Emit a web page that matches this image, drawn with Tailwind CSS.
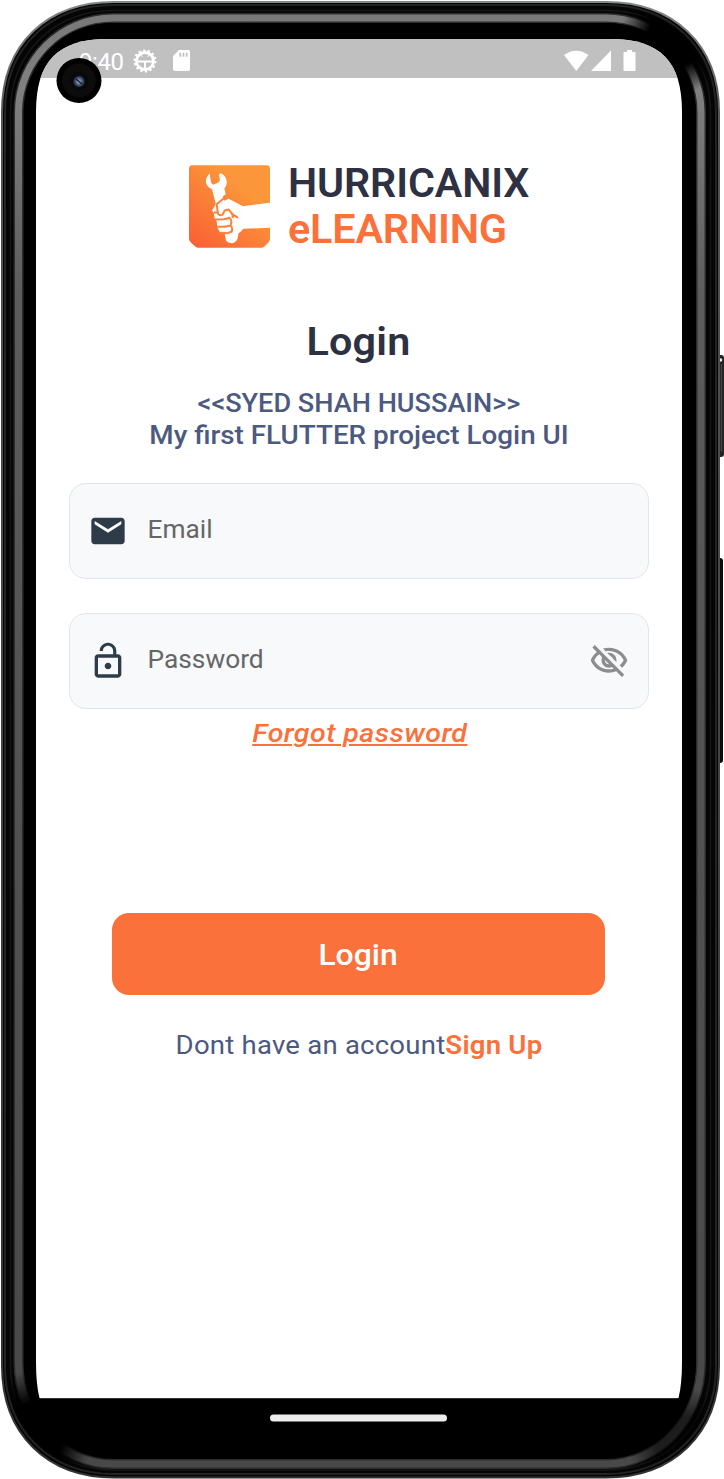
<!DOCTYPE html>
<html lang="en">
<head>
<meta charset="utf-8">
<title>Hurricanix eLearning</title>
<script src="https://cdn.jsdelivr.net/npm/@tailwindcss/browser@4"></script>
</head>
<body class="relative h-[1479px] w-[724px] overflow-hidden bg-white font-[Roboto,sans-serif]">
<!-- phone body -->
<svg class="absolute inset-0" width="724" height="1479" viewBox="0 0 724 1479" fill="none">
  <defs>
    <linearGradient id="edge" x1="0" y1="0" x2="0" y2="1479" gradientUnits="userSpaceOnUse"><stop stop-color="#858987"/><stop offset=".08" stop-color="#555"/><stop offset="1" stop-color="#333"/></linearGradient>
    <linearGradient id="band" x1="0" y1="0" x2="0" y2="1479" gradientUnits="userSpaceOnUse"><stop stop-color="#777"/><stop offset=".06" stop-color="#808080"/><stop offset=".2" stop-color="#5c5c5c"/><stop offset=".6" stop-color="#505050"/><stop offset="1" stop-color="#484848"/></linearGradient>
    <radialGradient id="fade"><stop offset=".5" stop-color="#000"/><stop offset="1" stop-color="#000" stop-opacity="0"/></radialGradient>
    <radialGradient id="lens"><stop stop-color="#a9c0e8"/><stop offset=".4" stop-color="#6578a0"/><stop offset="1" stop-color="#12151d"/></radialGradient>
    <clipPath id="body"><path d="M7 112C7 50 51 7 114 7H606C669 7 714 50 714 112V1366C714 1430 669 1472 606 1472H114C51 1472 7 1430 7 1366Z"/></clipPath>
    <clipPath id="bar"><path d="M0 0H724V78H0Z"/></clipPath>
  </defs>
  <rect x="714" y="355" width="10" height="102" rx="3" fill="#222"/><circle cx="720.5" cy="360" r="1.8" fill="#eee"/>
  <path d="M721.5 364v88" stroke="#444" stroke-width="1.5"/>
  <rect x="714" y="558" width="9" height="205" rx="3" fill="#0b0b0b"/>
  <path d="M2 112C2 44 47 2 114 2H606C673 2 719 44 719 112V1366C719 1434 673 1477.500 606 1477.500H114C47 1477.500 2 1434 2 1366Z" fill="#050505" stroke="url(#edge)" stroke-width="2"/>
  <path d="M5 112C5 47 50 5 114 5H606C670 5 716 47 716 112V1366C716 1431 670 1474 606 1474H114C50 1474 5 1431 5 1366Z" stroke="#222423" stroke-width="2"/>
  <path d="M10.500 112C10.500 53 54 10.500 114 10.500H606C666 10.500 710.500 53 710.500 112V1366C710.500 1425 666 1470 606 1470H114C54 1470 10.500 1425 10.500 1366Z" stroke="#161616" stroke-width="1.500"/>
  <path d="M18.500 112C18.500 60 61 18 113 18H606C658 18 701 60 701 112V1362C701 1420 658 1464 606 1464H113C61 1464 18.500 1420 18.500 1362Z" stroke="#2c2c2c" stroke-width="10"/>
  <path d="M18.500 112C18.500 60 61 18 113 18H606C658 18 701 60 701 112V1362C701 1420 658 1464 606 1464H113C61 1464 18.500 1420 18.500 1362Z" stroke="url(#band)" stroke-width="7"/>
  <g clip-path="url(#body)">
    <circle cx="676" cy="38" r="56" fill="url(#fade)"/>
    <ellipse cx="34" cy="1436" rx="58" ry="66" fill="url(#fade)"/>
    <circle cx="684" cy="1444" r="56" fill="url(#fade)" opacity=".6"/>
  </g>
  <path d="M24 114C24 63 62 23 113 23H606C657 23 696 63 696 114V1360C696 1418 655 1459 600 1459H120C65 1459 24 1418 24 1360Z" fill="#000"/>
  <path d="M36 112C36 61 58 39 108 39H610C660 39 682 61 682 112V1362Q682 1384 678.500 1398H39.500Q36 1384 36 1362Z" fill="#fff"/>
  <path clip-path="url(#bar)" d="M36 112C36 61 58 39 108 39H610C660 39 682 61 682 112Z" fill="#c0c0c0"/>
  <path d="M40 1398.500H678" stroke="#333"/>
  <rect x="270" y="1414.500" width="177" height="7" rx="3.500" fill="#eee"/>
</svg>

<main class="relative ml-9 flex h-[1398px] w-[646px] flex-col pt-[39px]">
  <header class="flex h-[39px] items-center pl-[43px] pr-[44px] text-white">
    <span class="mt-[6px] w-[54px] text-[24px] leading-none tracking-[-0.4px]">9:40</span>
    <svg class="mt-1" width="24" height="24" viewBox="0 0 24 24" fill="none" stroke="#fff">
      <circle cx="12" cy="12" r="8.500" stroke-width="2.800"/><circle cx="12" cy="12" r="10.500" stroke-width="2" stroke-dasharray="2.400 2.312"/>
      <path d="M4 12.500h16M12 12.500v8" stroke-width="2"/><path d="M8 6l1.500 2M16 6l-1.500 2" stroke-width="1"/>
    </svg>
    <svg class="mt-1 ml-[16px]" width="17" height="21" viewBox="0 0 17 21"><path fill="#fff" d="M6 0H15a2 2 0 0 1 2 2V19a2 2 0 0 1-2 2H2a2 2 0 0 1-2-2V6Z"/><path d="M7.300 2.800v4M10.500 2.800v4M13.700 2.800v4" stroke="#c0c0c0" stroke-width="1.700"/></svg>
    <svg class="mt-[5px] ml-auto" width="74" height="22" viewBox="0 0 74 22" fill="#fff"><path d="M0 5Q12.300-3.500 24.500 5L12.300 21Z M47 .5V21H27Z"/><path d="M63 0h5v2h2.500q1 0 1 1V20q0 1-1 1h-10q-1 0-1-1V3q0-1 1-1H63Z"/></svg>
  </header>

  <section class="mt-[87px] ml-[153px] flex">
    <svg width="81" height="83" viewBox="27 45 243 248">
      <defs><linearGradient id="logo" x1="0" y1="1" x2=".65" y2=".25"><stop stop-color="#fa5c35"/><stop offset="1" stop-color="#fb973a"/></linearGradient></defs>
      <path fill="url(#logo)" d="M37 45H260Q270 45 270 55V266Q270 272 266 276L254 288Q249 293 243 293H56Q50 293 45 288L32 276Q27 271 27 265V55Q27 45 37 45Z"/>
      <path fill="#fff" d="M89 70C81 77 77 87 78 98C80 108 88 113 96 117L107 159L104 168L96 181L101 186L104 205L110 213L112 231L120 246L134 249L138 272Q144 280 158 279Q172 275 174 260L175 250Q184 245 190 236L270 233V158L189 168L146 146L133 152L128 139L137 132L133 114C141 107 142 95 138 86C136 78 130 72 122 69L117 73L120 91L114 98L99 104L93 97Z"/>
      <path d="M138 139L110 162L114 191Q120 198 128 193L134 181L146 178L156 191L174 203M152 185Q161 195 158 204M102 187L116 187M105 208L132 207L149 203Q158 213 152 224M112 230L134 230L152 226Q160 236 154 246M121 248L143 249L155 244" fill="none" stroke="#fb823a" stroke-width="6" stroke-linejoin="round"/>
    </svg>
    <h1 class="ml-[17.500px] text-[40px] leading-[46px] font-semibold whitespace-nowrap text-[#2d3142]"><span class="-mt-[4px] block origin-left scale-x-[1.03] tracking-[-0.1px]">HURRICANIX</span><span class="block origin-left scale-x-[1.035] tracking-[-0.2px] text-[#fb713c]">eLEARNING</span></h1>
  </section>

  <h2 class="mt-[65px] -ml-px scale-x-[1.06] text-center text-[39px] leading-[48px] font-semibold tracking-[0.2px] text-[#2d3142]">Login</h2>
  <div class="mt-[21px] text-center text-[26px] leading-8 font-medium whitespace-nowrap text-[#4c5980]">
    <p class="scale-x-[1.042]">&lt;&lt;SYED SHAH HUSSAIN&gt;&gt;</p>
    <p class="scale-x-[1.07]">My first FLUTTER project Login UI</p>
  </div>

  <form class="mx-[33px] mt-[32px] flex flex-col gap-[34px]">
    <label class="flex h-[96px] items-center rounded-[17px] border-[1.5px] border-[#e2e5eb] bg-[#f8f9fb] pl-[18px]">
      <svg width="40" height="40" viewBox="0 0 24 24" fill="#2e3c49"><path d="M20 4H4c-1.100 0-1.990.9-1.990 2L2 18c0 1.100.9 2 2 2h16c1.100 0 2-.9 2-2V6c0-1.100-.9-2-2-2zm0 4l-8 5-8-5V6l8 5 8-5v2z"/></svg>
      <span class="-mt-[2px] ml-[19.500px] text-[26.3px] text-[#666]">Email</span>
    </label>
    <label class="flex h-[96px] items-center rounded-[17px] border-[1.5px] border-[#e2e5eb] bg-[#f8f9fb] pr-[19px] pl-[18px]">
      <svg width="40" height="40" viewBox="0 0 24 24" fill="#2e3c49"><path d="M12 17c1.100 0 2-.9 2-2s-.9-2-2-2-2 .9-2 2 .9 2 2 2zm6-9h-1V6c0-2.760-2.240-5-5-5S7 3.240 7 6h1.900c0-1.710 1.390-3.100 3.100-3.100s3.100 1.390 3.100 3.100v2H6c-1.100 0-2 .9-2 2v10c0 1.100.9 2 2 2h12c1.100 0 2-.9 2-2V10c0-1.100-.9-2-2-2zm0 12H6V10h12v10z"/></svg>
      <span class="-mt-[2px] ml-[19.500px] text-[26.3px] text-[#666]">Password</span>
      <svg class="ml-auto" width="40" height="40" viewBox="0 0 24 24" fill="#8b8d8e"><path d="M12 6c3.790 0 7.170 2.130 8.820 5.500-.59 1.220-1.420 2.270-2.410 3.120l1.410 1.410c1.390-1.230 2.490-2.770 3.180-4.530C21.270 7.110 17 4 12 4c-1.270 0-2.490.2-3.640.57l1.650 1.650C10.660 6.090 11.320 6 12 6zm-1.070 1.140L13 9.210c.57.250 1.030.71 1.280 1.280l2.070 2.070c.08-.34.14-.7.140-1.070C16.500 9.010 14.480 7 12 7c-.37 0-.72.05-1.070.14zM2.010 3.870l2.680 2.680C3.060 7.830 1.770 9.530 1 11.500 2.730 15.890 7 19 12 19c1.520 0 2.980-.29 4.320-.82l3.420 3.420 1.410-1.410L3.420 2.450 2.010 3.870zm7.500 7.500l2.610 2.610c-.04.01-.08.02-.12.02-1.380 0-2.500-1.120-2.500-2.500 0-.05.01-.08.01-.13zm-3.400-3.400l1.750 1.750c-.23.55-.36 1.150-.36 1.780 0 2.480 2.020 4.500 4.500 4.500.63 0 1.230-.13 1.770-.36l.98.98c-.88.24-1.800.38-2.750.38-3.790 0-7.170-2.130-8.820-5.500.7-1.430 1.720-2.610 2.930-3.530z"/></svg>
    </label>
  </form>
  <a class="mt-[8px] ml-[2px] scale-x-[1.1] self-center text-[26px] leading-8 font-medium tracking-[0.4px] text-[#fb713c] italic underline decoration-[1.5px] underline-offset-[2px]">Forgot password</a>

  <button class="mt-[164px] ml-[76px] h-[82px] w-[493px] rounded-[17px] bg-[#fb713c] pt-[3px] text-[29px] font-medium text-white"><span class="inline-block scale-x-[1.1]">Login</span></button>
  <p class="mt-[34px] scale-x-[1.06] text-center text-[26px] leading-8 whitespace-nowrap text-[#4c5980]"><span class="tracking-[0.2px]">Dont have an account</span><span class="font-semibold tracking-[0.2px] text-[#fb713c]">Sign Up</span></p>
</main>

<!-- front camera -->
<svg class="absolute top-[58px] left-[56px]" width="46" height="46" viewBox="0 0 46 46"><circle cx="23" cy="22.500" r="22.500"/><circle cx="23" cy="22.500" r="17" fill="#0c0c0c"/><circle cx="23" cy="23" r="9" fill="#07080b"/><circle cx="23" cy="23.500" r="6" fill="url(#lens)"/><path d="M20 21l6 5" stroke="#10131c" stroke-width="1.300"/></svg>
</body>
</html>
